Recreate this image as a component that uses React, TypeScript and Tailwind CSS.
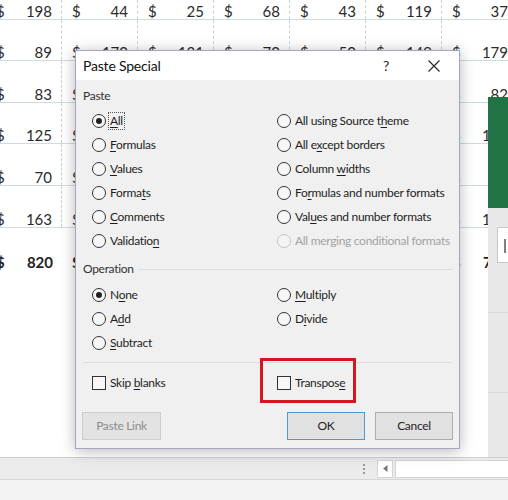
import React from "react";

type Row = { h: string; vals: number[]; bold?: boolean; last?: boolean };

const rows: Row[] = [
  { h: "h-[20px]", vals: [198, 44, 25, 68, 43, 119, 37] },
  { h: "h-[41px]", vals: [89, 170, 131, 70, 50, 149, 179] },
  { h: "h-[42px]", vals: [83, 112, 97, 64, 88, 131, 82] },
  { h: "h-[41px]", vals: [125, 96, 143, 77, 59, 118, 164] },
  { h: "h-[42px]", vals: [70, 58, 89, 41, 66, 102, 95] },
  { h: "h-[42px]", vals: [163, 147, 120, 99, 84, 137, 156] },
  { h: "h-[42px]", vals: [820, 732, 636, 419, 390, 756, 763], bold: true, last: true },
];

function U({ children }: { children: React.ReactNode }) {
  return <span className="underline underline-offset-2 decoration-1">{children}</span>;
}

function Radio({ checked, disabled }: { checked?: boolean; disabled?: boolean }) {
  return (
    <span
      className={
        disabled
          ? "w-[14px] h-[14px] rounded-full border border-[#c4c4c4] bg-[#f4f4f4] flex items-center justify-center shrink-0"
          : "w-[14px] h-[14px] rounded-full border border-[#333333] bg-[#f7f7f7] flex items-center justify-center shrink-0"
      }
    >
      {checked ? <span className="w-[6px] h-[6px] rounded-full bg-[#222222]" /> : null}
    </span>
  );
}

function Opt({
  checked,
  disabled,
  children,
}: {
  checked?: boolean;
  disabled?: boolean;
  children: React.ReactNode;
}) {
  return (
    <div className="h-[24px] flex items-center whitespace-nowrap">
      <Radio checked={checked} disabled={disabled} />
      <span className={disabled ? "ml-[4px] text-[#a3a3a3]" : "ml-[4px] text-[#1e1e1e]"}>{children}</span>
    </div>
  );
}

function Check({ children }: { children: React.ReactNode }) {
  return (
    <div className="h-[20px] flex items-center whitespace-nowrap">
      <span className="w-[14px] h-[14px] border border-[#333333] bg-[#f7f7f7] shrink-0" />
      <span className="ml-[4px] text-[#1e1e1e]">{children}</span>
    </div>
  );
}

export default function App() {
  return (
    <div className="relative w-[508px] h-[500px] overflow-hidden bg-white flex flex-col">
      {/* Sheet */}
      <div className="relative h-[457px] shrink-0 font-['Lato',sans-serif] text-[15px] text-[#2a2a2a]">
        <div className="-ml-[14px] flex flex-col">
          {rows.map((r, i) => (
            <div
              key={i}
              className={
                r.last
                  ? `${r.h} flex font-bold text-[#222]`
                  : `${r.h} flex border-b border-[#cfdcdc]`
              }
            >
              {r.vals.map((v, j) => (
                <div
                  key={j}
                  className={
                    r.last
                      ? "w-[76px] shrink-0 h-full flex items-end justify-between pl-[10px] pr-[9px]"
                      : "w-[76px] shrink-0 h-full flex items-end justify-between pl-[10px] pr-[9px] border-r border-dashed border-[#c9d3d3]"
                  }
                >
                  <span className="leading-[16px]">$</span>
                  <span className="leading-[16px]">{v}</span>
                </div>
              ))}
            </div>
          ))}
        </div>

        {/* Side window (green header + gray pane) */}
        <div className="absolute left-[488px] top-[97px] w-[20px] h-[111px] bg-[#217346]" />
        <div className="absolute left-[488px] top-[208px] w-[20px] h-[249px] bg-[#e8e8e8] flex flex-col">
          <div className="ml-[9px] mt-[19px] h-[36px] bg-white border border-[#c6c6c6] border-r-0 flex items-center pl-[5px] text-[15px] text-[#333] font-['Liberation_Sans',sans-serif]">
            |
          </div>
          <div className="mt-[49px] h-px bg-[#dadada]" />
          <div className="mt-[79px] h-px bg-[#dadada]" />
        </div>

        {/* Dialog */}
        <div className="absolute left-[75px] top-[50px] w-[385px] h-[399px] border border-[#a4a4c4] bg-[#f0f0f0] shadow-[0_2px_14px_rgba(0,0,0,0.28)] flex flex-col font-['Lato',sans-serif] text-[12px] tracking-[-0.3px] text-[#1e1e1e]">
          {/* Title bar */}
          <div className="h-[29px] bg-white flex items-center pl-[7px] shrink-0">
            <span className="text-[14px] tracking-[-0.2px] text-[#111]">Paste Special</span>
            <div className="ml-auto flex items-center">
              <span className="w-[30px] text-center text-[14px] text-[#222]">?</span>
              <span className="ml-[18px] w-[30px] mr-[10px] flex items-center justify-center">
                <svg width="12" height="12" viewBox="0 0 12 12">
                  <path d="M0.5 0.5 L11.5 11.5 M11.5 0.5 L0.5 11.5" stroke="#222" strokeWidth="1.1" fill="none" />
                </svg>
              </span>
            </div>
          </div>

          {/* Body */}
          <div className="flex flex-col pt-[7px]">
            <div className="h-[18px] flex items-center pl-[7px] text-[#333]">Paste</div>
            <div className="mt-[4px] pl-[16px] grid grid-cols-[185px_1fr]">
              <div className="flex flex-col">
                <div className="h-[24px] flex items-center">
                  <Radio checked />
                  <span className="ml-[2px] px-[1px] border border-dotted border-[#555] leading-[16px]">
                    <U>A</U>ll
                  </span>
                </div>
                <Opt>
                  <U>F</U>ormulas
                </Opt>
                <Opt>
                  <U>V</U>alues
                </Opt>
                <Opt>
                  Forma<U>t</U>s
                </Opt>
                <Opt>
                  <U>C</U>omments
                </Opt>
                <Opt>
                  Validatio<U>n</U>
                </Opt>
              </div>
              <div className="flex flex-col">
                <Opt>
                  All using Source t<U>h</U>eme
                </Opt>
                <Opt>
                  All e<U>x</U>cept borders
                </Opt>
                <Opt>
                  Column <U>w</U>idths
                </Opt>
                <Opt>
                  Fo<U>r</U>mulas and number formats
                </Opt>
                <Opt>
                  Val<U>u</U>es and number formats
                </Opt>
                <Opt disabled>All merging conditional formats</Opt>
              </div>
            </div>

            <div className="mt-[7px] h-[18px] flex items-center pl-[7px] pr-[6px] text-[#333]">
              <span>Operation</span>
              <div className="ml-[4px] flex-1 h-px bg-[#dcdcdc]" />
            </div>
            <div className="mt-[5px] pl-[16px] grid grid-cols-[185px_1fr]">
              <div className="flex flex-col">
                <Opt checked>
                  N<U>o</U>ne
                </Opt>
                <Opt>
                  A<U>d</U>d
                </Opt>
                <Opt>
                  <U>S</U>ubtract
                </Opt>
              </div>
              <div className="flex flex-col">
                <Opt>
                  <U>M</U>ultiply
                </Opt>
                <Opt>
                  D<U>i</U>vide
                </Opt>
              </div>
            </div>

            <div className="mt-[7px] mx-[7px] h-px bg-[#dcdcdc]" />

            <div className="mt-[10px] pl-[16px] grid grid-cols-[185px_1fr]">
              <Check>
                Skip <U>b</U>lanks
              </Check>
              <Check>
                Transpos<U>e</U>
              </Check>
            </div>

            <div className="mt-[19px] px-[6px] flex items-center">
              <div className="w-[79px] h-[28px] bg-[#e3e3e3] border border-[#cdcdcd] flex items-center justify-center text-[#8c8c8c]">
                Paste Link
              </div>
              <div className="ml-auto flex gap-[10px]">
                <div className="w-[78px] h-[28px] bg-[#e1e1e1] border border-[#4f98d2] flex items-center justify-center">
                  OK
                </div>
                <div className="w-[78px] h-[28px] bg-[#e1e1e1] border border-[#adadad] flex items-center justify-center">
                  Cancel
                </div>
              </div>
            </div>
          </div>
        </div>

        {/* Red highlight annotation */}
        <div className="absolute left-[260px] top-[358px] w-[96px] h-[45px] border-[3px] border-[#d2181e]" />
      </div>

      {/* Status / scroll bar */}
      <div className="h-[22px] shrink-0 bg-[#ebebeb] border-t border-[#cfcfcf] flex items-center">
        <div className="ml-[363px] flex flex-col gap-[2px]">
          <span className="w-[2px] h-[2px] bg-[#9a9a9a]" />
          <span className="w-[2px] h-[2px] bg-[#9a9a9a]" />
          <span className="w-[2px] h-[2px] bg-[#9a9a9a]" />
        </div>
        <div className="ml-[12px] w-[16px] h-[18px] bg-white border border-[#d4d4d4] flex items-center justify-center">
          <svg width="5" height="7" viewBox="0 0 5 7">
            <path d="M4.5 0 L0 3.5 L4.5 7 Z" fill="#777" />
          </svg>
        </div>
        <div className="ml-[2px] flex-1 h-[18px] bg-white border border-[#d4d4d4] border-r-0" />
      </div>
      <div className="h-[21px] shrink-0 bg-[#f3f3f3] border-t border-[#d6d6d6]" />
    </div>
  );
}
